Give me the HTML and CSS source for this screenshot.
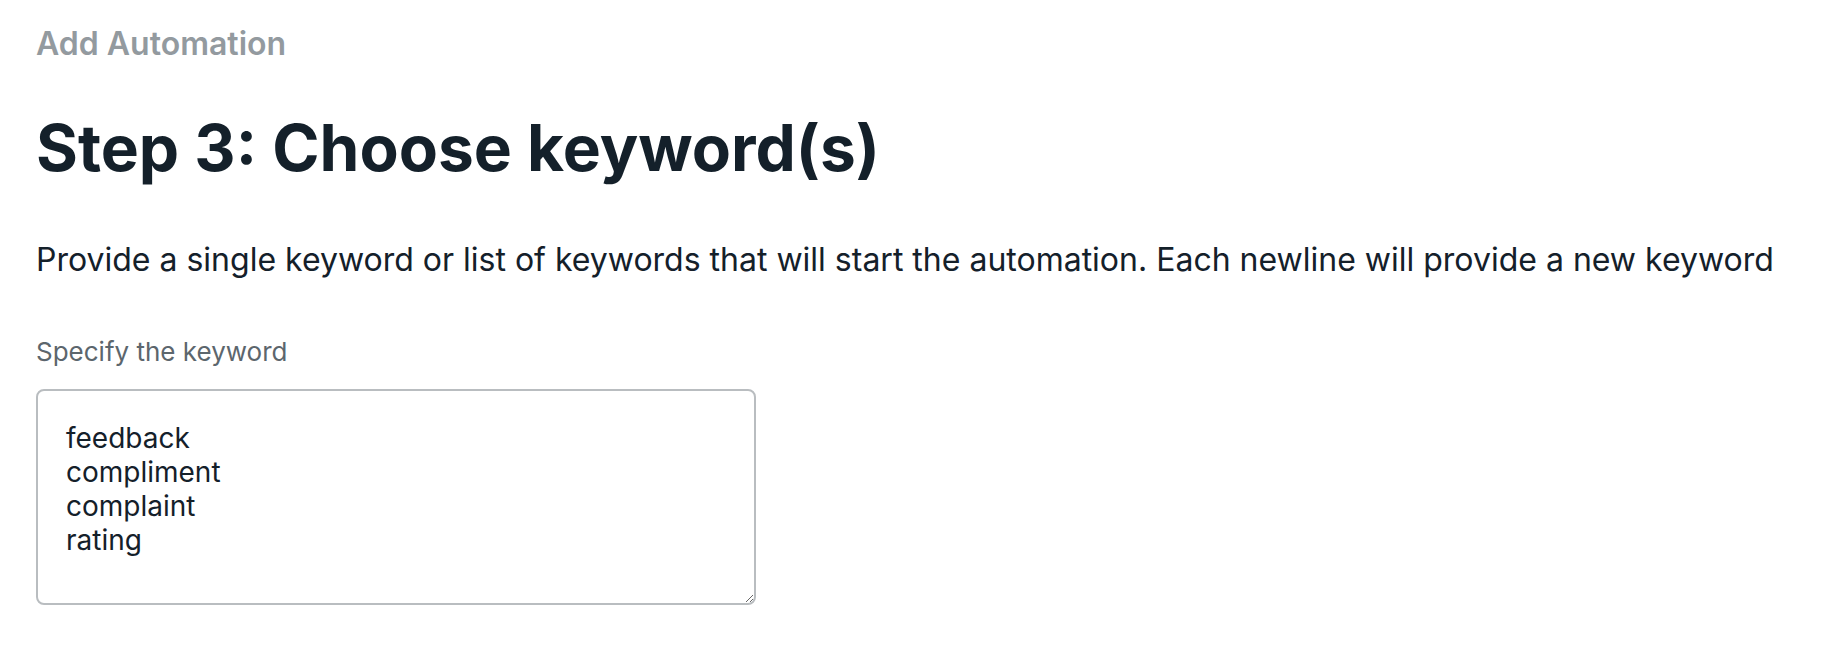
FILE: index.html
```html
<!DOCTYPE html>
<html lang="en">
<head>
    <meta charset="UTF-8">
    <meta name="viewport" content="width=device-width, initial-scale=1.0">
    <title>Add Automation</title>
    <link rel="stylesheet" href="styles.css">
</head>
<body>

    <div class="page">
        <div class="breadcrumb">Add Automation</div>

        <h1>Step 3: Choose keyword(s)</h1>

        <p class="intro">Provide a single keyword or list of keywords that will start the automation. Each newline will provide a new keyword</p>

        <!-- Keyword field -->
        <label class="field-label" for="keywords">Specify the keyword</label>
        <textarea id="keywords" class="keywords">feedback
compliment
complaint
rating</textarea>
    </div>

</body>
</html>
```

FILE: styles.css
```css
/* Basic styling */
body {
    margin: 0;
    font-family: Inter, "Noto Sans", sans-serif;
    background-color: #ffffff;
    color: #14202a;
}
.page {
    display: flex;
    flex-direction: column;
    align-items: flex-start;
    padding: 25px 36px;
}
.breadcrumb {
    font-size: 32px;
    line-height: 38px;
    font-weight: 600;
    color: #939a9f;
}
h1 {
    margin: 46px 0 0;
    font-size: 64px;
    line-height: 77px;
    font-weight: 700;
    color: #14202a;
}
.intro {
    margin: 55px 0 0;
    font-size: 32px;
    line-height: 38px;
    color: #14202a;
}
.field-label {
    margin-top: 57px;
    font-size: 26px;
    line-height: 31px;
    color: #5c666d;
}
.keywords {
    margin-top: 22px;
    width: 720px;
    height: 216px;
    box-sizing: border-box;
    padding: 30px 28px;
    border: 2px solid #b9bdc0;
    border-radius: 8px;
    font-family: Inter, "Noto Sans", sans-serif;
    font-size: 28px;
    line-height: 34px;
    color: #14202a;
    outline: none;
}
```
